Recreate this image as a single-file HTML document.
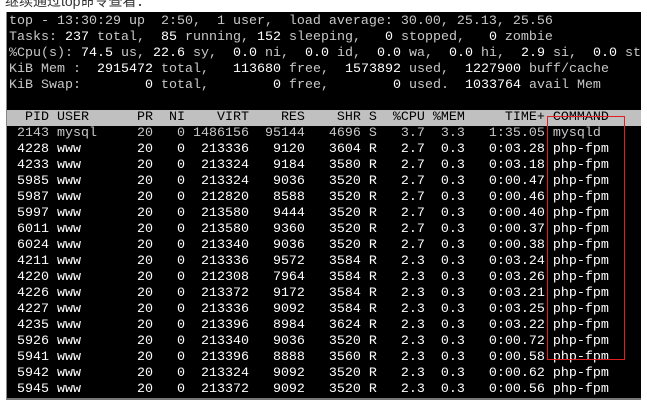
<!DOCTYPE html>
<html><head><meta charset="utf-8"><style>
body{margin:0;width:647px;height:400px;background:#fff;overflow:hidden;position:relative;font-family:"Liberation Sans","Noto Sans CJK SC",sans-serif}
.t{position:absolute;left:5px;top:-9px;font-size:14px;color:#333}
.term{position:absolute;left:6px;top:12px;width:634px;height:386px;background:#000;border-left:1px solid #888;border-bottom:2px solid #777;overflow:hidden}
pre{margin:0;position:absolute;left:2px;top:2px;font-family:"Liberation Mono",monospace;font-size:13.33px;line-height:16px;color:#c8c8c8;white-space:pre}
.h{background:#c0c0c0;color:#000;display:inline-block;width:640px;margin-left:-3px;padding-left:3px}
b{color:#fff;font-weight:normal}
.box{position:absolute;left:547px;top:116px;width:76px;height:242px;border:1px solid #e02020}
</style></head><body>
<div class="t">继续通过top命令查看：</div>
<div class="term"><pre>top - 13:30:29 up  2:50,  1 user,  load average: 30.00, 25.13, 25.56
Tasks: <b>237</b> total,  <b>85</b> running, <b>152</b> sleeping,   <b>0</b> stopped,   <b>0</b> zombie
%Cpu(s): <b>74.5</b> us, <b>22.6</b> sy,  <b>0.0</b> ni,  <b>0.0</b> id,  <b>0.0</b> wa,  <b>0.0</b> hi,  <b>2.9</b> si,  <b>0.0</b> st
KiB Mem :  <b>2915472</b> total,   <b>113680</b> free,  <b>1573892</b> used,  <b>1227900</b> buff/cache
KiB Swap:        <b>0</b> total,        <b>0</b> free,        <b>0</b> used.  <b>1033764</b> avail Mem

<span class="h">  PID USER      PR  NI    VIRT    RES    SHR S  %CPU %MEM     TIME+ COMMAND                     </span>
 2143 mysql     20   0 1486156  95144   4696 S   3.7  3.3   1:35.05 mysqld
<b> 4228 www       20   0  213336   9120   3604 R   2.7  0.3   0:03.28 php-fpm
 4233 www       20   0  213324   9184   3580 R   2.7  0.3   0:03.18 php-fpm
 5985 www       20   0  213324   9036   3520 R   2.7  0.3   0:00.47 php-fpm
 5987 www       20   0  212820   8588   3520 R   2.7  0.3   0:00.46 php-fpm
 5997 www       20   0  213580   9444   3520 R   2.7  0.3   0:00.40 php-fpm
 6011 www       20   0  213580   9360   3520 R   2.7  0.3   0:00.37 php-fpm
 6024 www       20   0  213340   9036   3520 R   2.7  0.3   0:00.38 php-fpm
 4211 www       20   0  213336   9572   3584 R   2.3  0.3   0:03.24 php-fpm
 4220 www       20   0  212308   7964   3584 R   2.3  0.3   0:03.26 php-fpm
 4226 www       20   0  213372   9172   3584 R   2.3  0.3   0:03.21 php-fpm
 4227 www       20   0  213336   9092   3584 R   2.3  0.3   0:03.25 php-fpm
 4235 www       20   0  213396   8984   3624 R   2.3  0.3   0:03.22 php-fpm
 5926 www       20   0  213340   9036   3520 R   2.3  0.3   0:00.72 php-fpm
 5941 www       20   0  213396   8888   3560 R   2.3  0.3   0:00.58 php-fpm
 5942 www       20   0  213324   9092   3520 R   2.3  0.3   0:00.62 php-fpm
 5945 www       20   0  213372   9092   3520 R   2.3  0.3   0:00.56 php-fpm</b></pre></div>
<div class="box"></div>
</body></html>
